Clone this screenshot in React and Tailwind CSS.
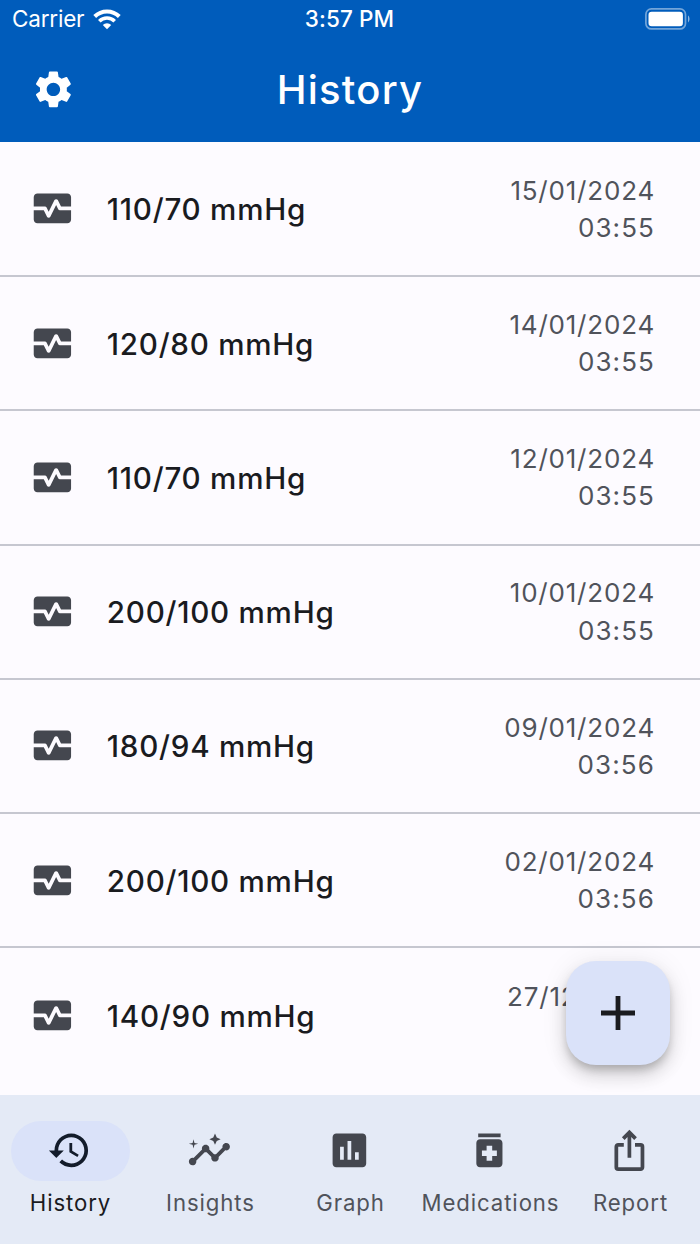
import { useState } from 'react';
import {
  MdAssessment,
  MdHistory,
  MdInsights,
  MdIosShare,
  MdMedication,
  MdMonitorHeart,
  MdSettings,
} from 'react-icons/md';

const READINGS = [
  { value: '110/70 mmHg', date: '15/01/2024', time: '03:55' },
  { value: '120/80 mmHg', date: '14/01/2024', time: '03:55' },
  { value: '110/70 mmHg', date: '12/01/2024', time: '03:55' },
  { value: '200/100 mmHg', date: '10/01/2024', time: '03:55' },
  { value: '180/94 mmHg', date: '09/01/2024', time: '03:56' },
  { value: '200/100 mmHg', date: '02/01/2024', time: '03:56' },
  { value: '140/90 mmHg', date: '27/12/2023', time: '03:56' },
];

const TABS = [
  { label: 'History', icon: MdHistory },
  { label: 'Insights', icon: MdInsights },
  { label: 'Graph', icon: MdAssessment },
  { label: 'Medications', icon: MdMedication },
  { label: 'Report', icon: MdIosShare },
];

function StatusBar() {
  return (
    <div className="grid h-[38px] grid-cols-3 items-center pr-[10px] pl-[12px]">
      <div className="flex items-center gap-[9px]">
        <span className="text-[22.5px] leading-none tracking-[-0.2px]">Carrier</span>
        <svg className="h-[21px] w-[28px]" viewBox="0 0 28 21" fill="none" stroke="white">
          <path d="M1.7 7.5a17.4 17.4 0 0 1 24.6 0" strokeWidth="4" />
          <path d="M6.3 12.2a10.9 10.9 0 0 1 15.4 0" strokeWidth="3.6" />
          <path d="M14 20.3 9.8 16a6 6 0 0 1 8.4 0z" fill="white" stroke="none" />
        </svg>
      </div>
      <span className="pr-[3px] text-center text-[22.5px] leading-none font-medium tracking-[0.1px]">
        3:57 PM
      </span>
      <svg className="h-[22px] w-[45px] justify-self-end" viewBox="0 0 45 22">
        <rect
          x="0.9"
          y="0.9"
          width="39.6"
          height="20"
          rx="5.5"
          fill="none"
          stroke="white"
          strokeOpacity="0.45"
          strokeWidth="1.7"
        />
        <rect x="3.5" y="3.7" width="34.4" height="14.6" rx="3.2" fill="white" />
        <path d="M43 7.6c2 1.3 2 5.5 0 6.8z" fill="white" fillOpacity="0.55" />
      </svg>
    </div>
  );
}

function Reading({ value, date, time }) {
  return (
    <li className="flex h-[134.25px] items-center border-b-2 border-[#c6c7d0] pr-[45px] pl-[30px] last:border-b-0">
      <MdMonitorHeart className="size-[44.8px] shrink-0 text-[#44474f]" />
      <span className="ml-[32px] flex-1 pt-[1.5px] text-[29.6px] font-medium tracking-[0.75px] text-[#1a1b1f]">
        {value}
      </span>
      <div className="text-right text-[26px] leading-[37.3px] text-[#50535b]">
        <p className="tracking-[0.8px]">{date}</p>
        <p className="tracking-[1.1px]">{time}</p>
      </div>
    </li>
  );
}

export default function App() {
  const [tab, setTab] = useState('History');

  return (
    <div className="relative flex h-[1244px] w-[700px] flex-col overflow-hidden bg-[#fdfbff] font-['Inter',sans-serif]">
      <header className="h-[142px] shrink-0 bg-[#005cbb] text-white">
        <StatusBar />
        <div className="grid h-[103px] grid-cols-[1fr_auto_1fr] items-center px-[31px]">
          <button type="button" aria-label="Settings" className="justify-self-start">
            <MdSettings className="size-[44.8px]" />
          </button>
          <h1 className="pt-px text-[40px] leading-none font-medium tracking-[1.2px]">{tab}</h1>
        </div>
      </header>

      <ul className="min-h-0 flex-1 overflow-hidden pt-[0.75px]">
        {READINGS.map((reading) => (
          <Reading key={reading.date} {...reading} />
        ))}
      </ul>

      <button
        type="button"
        aria-label="Add reading"
        className="absolute right-[30px] bottom-[179px] flex size-[104.5px] items-center justify-center rounded-[30px] bg-[#dae2f9] text-[#1a1b1f] shadow-[0_6px_9px_-2px_rgba(0,0,0,0.2),0_11px_18px_rgba(0,0,0,0.14),0_2px_28px_rgba(0,0,0,0.08)]"
      >
        <svg className="size-[34px]" viewBox="0 0 34 34" stroke="currentColor" strokeWidth="4.8">
          <path d="M0 17h34M17 0v34" />
        </svg>
      </button>

      <nav className="flex h-[149px] shrink-0 bg-[#e4eaf6] pt-[26px]">
        {TABS.map(({ label, icon: Icon }) => (
          <button
            key={label}
            type="button"
            onClick={() => setTab(label)}
            className={`flex w-[140px] flex-col items-center ${
              tab === label ? 'text-[#1a1b1f]' : 'text-[#50535b]'
            }`}
          >
            <span
              className={`flex h-[60px] w-[119px] items-center justify-center rounded-full ${
                tab === label ? 'bg-[#dae2f9] text-[#131c2b]' : 'text-[#44474f]'
              }`}
            >
              <Icon className="mr-px mb-px size-[44.8px]" />
            </span>
            <span className="mt-[7px] pl-px text-[22.2px] leading-[29px] tracking-[0.9px] whitespace-nowrap">
              {label}
            </span>
          </button>
        ))}
      </nav>
    </div>
  );
}
